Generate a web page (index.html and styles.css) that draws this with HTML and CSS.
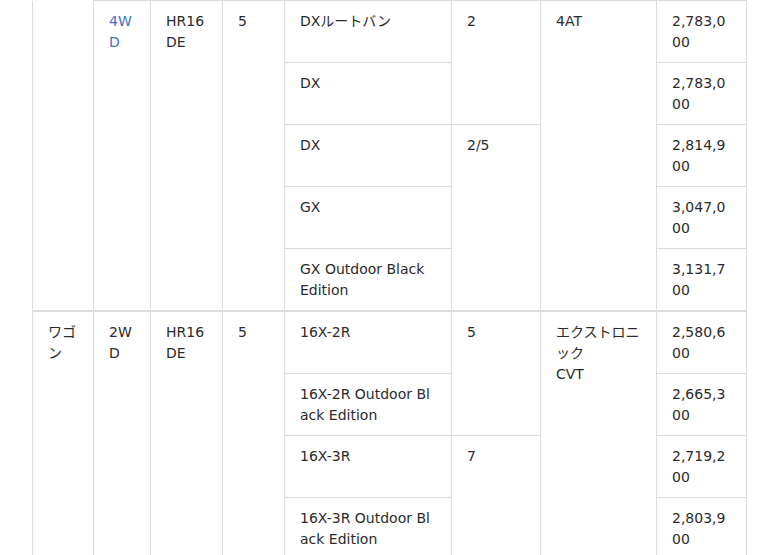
FILE: index.html
```html
<!DOCTYPE html>
<html lang="ja">
<head>
<meta charset="utf-8">
<title>グレード・価格</title>
<link rel="stylesheet" href="styles.css">
</head>
<body>
<table class="spec">
  <colgroup>
    <col class="c-body">
    <col class="c-drive">
    <col class="c-engine">
    <col class="c-door">
    <col class="c-grade">
    <col class="c-seat">
    <col class="c-trans">
    <col class="c-price">
  </colgroup>
  <tbody>
    <tr>
      <td rowspan="5" class="cont"></td>
      <td rowspan="5"><a href="#" class="link">4WD</a></td>
      <td rowspan="5">HR16DE</td>
      <td rowspan="5">5</td>
      <td>DXルートバン</td>
      <td rowspan="2">2</td>
      <td rowspan="5">4AT</td>
      <td>2,783,000</td>
    </tr>
    <tr>
      <td>DX</td>
      <td>2,783,000</td>
    </tr>
    <tr>
      <td>DX</td>
      <td rowspan="3">2/5</td>
      <td>2,814,900</td>
    </tr>
    <tr>
      <td>GX</td>
      <td>3,047,000</td>
    </tr>
    <tr>
      <td>GX Outdoor Black Edition</td>
      <td>3,131,700</td>
    </tr>
    <tr class="group">
      <td rowspan="4">ワゴン</td>
      <td rowspan="4">2WD</td>
      <td rowspan="4">HR16DE</td>
      <td rowspan="4">5</td>
      <td>16X-2R</td>
      <td rowspan="2">5</td>
      <td rowspan="4">エクストロニック<br>CVT</td>
      <td>2,580,600</td>
    </tr>
    <tr>
      <td>16X-2R Outdoor Black Edition</td>
      <td>2,665,300</td>
    </tr>
    <tr>
      <td>16X-3R</td>
      <td rowspan="2">7</td>
      <td>2,719,200</td>
    </tr>
    <tr>
      <td>16X-3R Outdoor Black Edition</td>
      <td>2,803,900</td>
    </tr>
  </tbody>
</table>
</body>
</html>
```

FILE: styles.css
```css
html, body {
  margin: 0;
  padding: 0;
  background: #fff;
}

body {
  font-family: "DejaVu Sans", "Noto Sans CJK JP", sans-serif;
  font-size: 14px;
  line-height: 21px;
  color: #2b2b2b;
}

.spec {
  margin-left: 32px;
  width: 714px;
  table-layout: fixed;
  border-collapse: collapse;
}

.c-body { width: 61px; }
.c-drive { width: 57px; }
.c-engine { width: 72px; }
.c-door { width: 62px; }
.c-grade { width: 167px; }
.c-seat { width: 89px; }
.c-trans { width: 116px; }
.c-price { width: 90px; }

.spec td {
  border: 1px solid #dcdcdc;
  padding: 10px 15px 9px;
  vertical-align: top;
  text-align: left;
  word-break: break-all;
}

.spec td.cont {
  border-top: none;
}

.spec tr.group td {
  border-top: 2px solid #dcdcdc;
}

.link {
  color: #3d72c0;
  text-decoration: none;
}
```
